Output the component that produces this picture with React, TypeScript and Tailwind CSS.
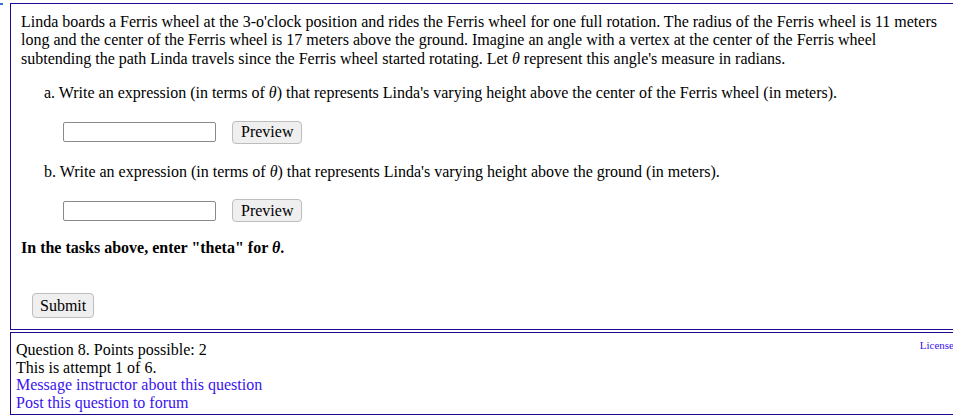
export default function App() {
    return (
        <div className="relative w-[953px] h-[417px] overflow-hidden bg-white text-black text-[16px] leading-[18.4px] font-['Liberation_Serif','Times_New_Roman',serif]">
            <div className="absolute left-0 top-[3px] w-[3px] h-[2px] bg-[#3a6fd8]" />

            <div className="ml-[10px] mt-[3px] w-[960px] border-l border-t border-b border-[#1a0a8f] pl-[10px] pt-[9px] pb-[11px]">
                <p>
                    Linda boards a Ferris wheel at the 3-o'clock position and rides the Ferris wheel for one full rotation. The radius of the Ferris wheel is 11 meters
                    <br />
                    long and the center of the Ferris wheel is 17 meters above the ground. Imagine an angle with a vertex at the center of the Ferris wheel
                    <br />
                    subtending the path Linda travels since the Ferris wheel started rotating. Let <i>θ</i> represent this angle's measure in radians.
                </p>

                <div className="pl-[23px] mt-[16px]">
                    <p>a. Write an expression (in terms of <i>θ</i>) that represents Linda's varying height above the center of the Ferris wheel (in meters).</p>
                    <div className="flex items-center gap-[16px] pl-[19px] mt-[18px]">
                        <div className="w-[153px] h-[20px] border border-[#8a8a8a] rounded-[2px]" />
                        <button className="h-[23px] px-[8px] bg-[#efefef] border border-[#bdbdbd] rounded-[4px] leading-none">Preview</button>
                    </div>

                    <p className="mt-[19px]">b. Write an expression (in terms of <i>θ</i>) that represents Linda's varying height above the ground (in meters).</p>
                    <div className="flex items-center gap-[16px] pl-[19px] mt-[18px]">
                        <div className="w-[153px] h-[20px] border border-[#8a8a8a] rounded-[2px]" />
                        <button className="h-[23px] px-[8px] bg-[#efefef] border border-[#bdbdbd] rounded-[4px] leading-none">Preview</button>
                    </div>
                </div>

                <p className="mt-[17px] font-bold">In the tasks above, enter "theta" for <i>θ</i>.</p>

                <div className="pl-[11px] mt-[36px]">
                    <button className="h-[25px] px-[7px] bg-[#efefef] border border-[#bdbdbd] rounded-[4px] leading-none">Submit</button>
                </div>
            </div>

            <div className="ml-[10px] mt-[2px] w-[944px] border-l border-t border-b border-[#1a0a8f] pl-[5px] pt-[8px] pb-[3px] leading-[17.5px] flex">
                <div className="flex-1">
                    <div>Question 8. Points possible: 2</div>
                    <div>This is attempt 1 of 6.</div>
                    <div className="text-[#3a14ee]">Message instructor about this question</div>
                    <div className="text-[#3a14ee]">Post this question to forum</div>
                </div>
                <div className="-mt-[4px] text-[11px] text-[#3a14ee]">License</div>
            </div>
        </div>
    );
}
